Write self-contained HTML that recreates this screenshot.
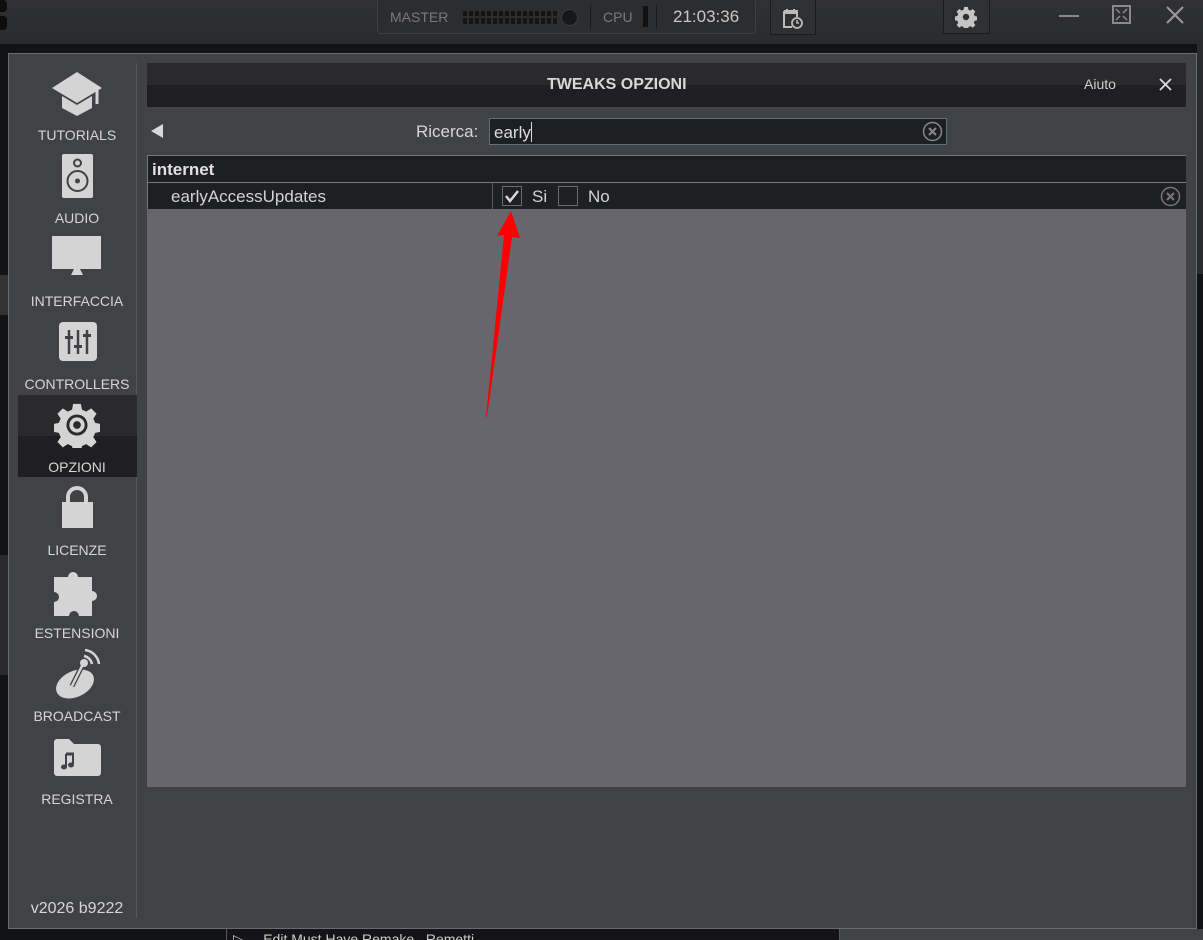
<!DOCTYPE html>
<html><head><meta charset="utf-8"><style>
*{margin:0;padding:0;box-sizing:border-box}
html,body{width:1203px;height:940px;overflow:hidden}
body{background:#121315;font-family:"Liberation Sans",sans-serif;position:relative}
.a{position:absolute}
.top{left:0;top:0;width:1203px;height:44px;background:linear-gradient(#303133,#2a2b2d)}
.dlg{left:8px;top:53px;width:1189px;height:876px;background:#414246;border:1px solid #6b6b6e}
.lbl{position:absolute;left:18px;width:118px;text-align:center;color:#d6d6d6;font-size:14px}
.ic{position:absolute}
</style></head><body>
<div class="a top"></div>
<div class="a" style="left:0;top:0;width:7px;height:12px;background:#0d0d0e;border-radius:0 4px 4px 0"></div>
<div class="a" style="left:0;top:16px;width:7px;height:14px;background:#0d0d0e;border-radius:0 4px 4px 0"></div>
<div class="a" style="left:377px;top:0;width:379px;height:34px;background:#2c2d2f;border:1px solid #3e3f42;border-top:none;border-radius:0 0 4px 4px"></div>
<div class="a" style="left:390px;top:9px;color:#7a7a7c;font-size:14px">MASTER</div>
<div class="a" style="left:463px;top:11px;width:94px;height:13px;background:repeating-linear-gradient(90deg,#151516 0 4px,transparent 4px 6px);"></div>
<div class="a" style="left:463px;top:16px;width:94px;height:2px;background:#2c2d2f"></div>
<div class="a" style="left:561px;top:9px;width:17px;height:17px;border-radius:50%;background:#161718;border:1px solid #3a3a3c"></div>
<div class="a" style="left:590px;top:5px;width:1px;height:24px;background:#18191a"></div>
<div class="a" style="left:603px;top:9px;color:#7a7a7c;font-size:14px">CPU</div>
<div class="a" style="left:643px;top:6px;width:5px;height:21px;background:#111"></div>
<div class="a" style="left:656px;top:5px;width:1px;height:24px;background:#18191a"></div>
<div class="a" style="left:673px;top:7px;color:#c8c8c8;font-size:17px">21:03:36</div>
<div class="a" style="left:770px;top:0;width:46px;height:35px;background:#2f3032;border:1px solid #1b1b1c;border-top:none"></div>
<svg class="a" style="left:782px;top:7px" width="22" height="22" viewBox="0 0 22 22"><path d="M2 4h13v6M2 4v16h8" fill="none" stroke="#bbb" stroke-width="2"/><rect x="2" y="4" width="13" height="3" fill="#bbb"/><path d="M5 2v3M12 2v3" stroke="#bbb" stroke-width="2"/><circle cx="15" cy="16" r="5" fill="none" stroke="#bbb" stroke-width="1.8"/><path d="M15 13v3h2" stroke="#bbb" fill="none" stroke-width="1.5"/></svg>
<div class="a" style="left:943px;top:0;width:47px;height:34px;background:#2f3032;border:1px solid #1b1b1c;border-top:none"></div>
<svg class="a" style="left:955px;top:6px" width="22" height="22" viewBox="0 0 24 24"><path fill="#c4c4c4" d="M10 1h4l.6 3 2.2 1 2.6-1.7 2.8 2.8-1.7 2.6 1 2.2 3 .6v4l-3 .6-1 2.2 1.7 2.6-2.8 2.8-2.6-1.7-2.2 1-.6 3h-4l-.6-3-2.2-1-2.6 1.7-2.8-2.8 1.7-2.6-1-2.2-3-.6v-4l3-.6 1-2.2-1.7-2.6 2.8-2.8 2.6 1.7 2.2-1z"/><circle cx="12" cy="12" r="3.5" fill="#2f3032"/></svg>
<div class="a" style="left:1059px;top:15px;width:20px;height:2px;background:#8a8a8c"></div>
<div class="a" style="left:1112px;top:5px;width:19px;height:19px;border:2px solid #8a8a8c"></div>
<svg class="a" style="left:1112px;top:5px" width="19" height="19"><path d="M4 4l4 4M15 4l-4 4M4 15l4-4M15 15l-4-4" stroke="#8a8a8c" stroke-width="1.5"/></svg>
<svg class="a" style="left:1165px;top:5px" width="20" height="20"><path d="M2 2l16 16M18 2L2 18" stroke="#9a9a9c" stroke-width="2"/></svg>
<div class="a" style="left:0;top:275px;width:8px;height:40px;background:#333"></div>
<div class="a" style="left:0;top:555px;width:8px;height:120px;background:#2b2b2d"></div>
<div class="a" style="left:1197px;top:44px;width:6px;height:230px;background:#2a2b2d"></div>
<div class="a" style="left:226px;top:929px;width:614px;height:11px;background:#141416;border-left:1px solid #555;border-right:1px solid #555;overflow:hidden">
<div style="position:absolute;left:6px;top:3px;color:#ccc;font-size:14px;line-height:14px;white-space:nowrap">▷&nbsp;&nbsp;&nbsp;&nbsp;&nbsp;Edit Must Have Remake &nbsp;&nbsp;Remetti</div></div>
<div class="a" style="left:840px;top:929px;width:363px;height:11px;background:#414246"></div>

<div class="a dlg"></div>
<div class="a" style="left:136px;top:63px;width:1px;height:855px;background:#56575a"></div>
<div class="a" style="left:18px;top:395px;width:119px;height:82px;background:linear-gradient(#2a2a2c 0 50%,#1f1f21 50%)"></div>

<svg class="ic" style="left:50px;top:70px" width="54" height="48" viewBox="0 0 54 48"><path d="M27 2L2 18l25 15 25-15z" fill="#d4d4d4"/><path d="M12 26v12l15 8 15-8V26l-15 9z" fill="#d4d4d4"/><path d="M47 20v14" stroke="#d4d4d4" stroke-width="3"/></svg>
<div class="lbl" style="top:127px">TUTORIALS</div>
<svg class="ic" style="left:62px;top:154px" width="31" height="44"><rect x="0" y="0" width="31" height="44" rx="2" fill="#d4d4d4"/><circle cx="15.5" cy="9" r="3.5" fill="none" stroke="#414246" stroke-width="2"/><circle cx="15.5" cy="27" r="10" fill="none" stroke="#414246" stroke-width="2"/><circle cx="15.5" cy="27" r="2.5" fill="#414246"/></svg>
<div class="lbl" style="top:210px">AUDIO</div>
<svg class="ic" style="left:52px;top:236px" width="50" height="42"><rect x="0" y="0" width="49" height="33" fill="#d4d4d4"/><path d="M22 33h6l3 6H19z" fill="#d4d4d4"/></svg>
<div class="lbl" style="top:293px">INTERFACCIA</div>
<svg class="ic" style="left:59px;top:322px" width="38" height="39"><rect x="0" y="0" width="38" height="39" rx="4" fill="#d4d4d4"/><g stroke="#414246" stroke-width="2.5"><path d="M10 8v24M19 8v24M28 8v24"/></g><g fill="#414246"><rect x="6" y="14" width="8" height="3"/><rect x="15" y="23" width="8" height="3"/><rect x="24" y="12" width="8" height="3"/></g></svg>
<div class="lbl" style="top:376px">CONTROLLERS</div>
<svg class="ic" style="left:54px;top:402px" width="46" height="46" viewBox="0 0 24 24"><path fill="#d4d4d4" d="M10 1h4l.6 3 2.2 1 2.6-1.7 2.8 2.8-1.7 2.6 1 2.2 3 .6v4l-3 .6-1 2.2 1.7 2.6-2.8 2.8-2.6-1.7-2.2 1-.6 3h-4l-.6-3-2.2-1-2.6 1.7-2.8-2.8 1.7-2.6-1-2.2-3-.6v-4l3-.6 1-2.2-1.7-2.6 2.8-2.8 2.6 1.7 2.2-1z"/><circle cx="12" cy="12" r="5.5" fill="#2a2a2c"/><circle cx="12" cy="12" r="4" fill="#d4d4d4"/><circle cx="12" cy="12" r="2" fill="#2a2a2c"/></svg>
<div class="lbl" style="top:459px">OPZIONI</div>
<svg class="ic" style="left:61px;top:485px" width="32" height="44"><path d="M7 18v-6a9 9 0 0118 0v6" fill="none" stroke="#d4d4d4" stroke-width="4"/><rect x="1" y="17" width="31" height="26" fill="#d4d4d4"/></svg>
<div class="lbl" style="top:542px">LICENZE</div>
<svg class="ic" style="left:52px;top:567px" width="50" height="50" viewBox="0 0 50 50"><path fill="#d4d4d4" d="M2 10h14a5 5 0 1 1 10 0h14v14a5 5 0 1 1 0 10v15H27a5 5 0 1 0-10 0H2V35a5 5 0 1 0 0-10z"/></svg>
<div class="lbl" style="top:625px">ESTENSIONI</div>
<svg class="ic" style="left:54px;top:648px" width="48" height="52"><ellipse cx="21" cy="36" rx="20" ry="13" transform="rotate(-25 21 36)" fill="#d4d4d4"/><path d="M18 38l11-22" stroke="#414246" stroke-width="5"/><path d="M18 38l11-22" stroke="#d4d4d4" stroke-width="2.5"/><circle cx="30" cy="15" r="4" fill="#d4d4d4"/><path d="M30 8a10 10 0 0 1 8 8M31 2a16 16 0 0 1 14 14" fill="none" stroke="#d4d4d4" stroke-width="2.5"/></svg>
<div class="lbl" style="top:708px">BROADCAST</div>
<svg class="ic" style="left:54px;top:739px" width="47" height="38"><path d="M0 3a3 3 0 013-3h12l5 5h24a3 3 0 013 3v26a3 3 0 01-3 3H3a3 3 0 01-3-3z" fill="#d4d4d4"/><path d="M12 15h8" stroke="#414246" stroke-width="3"/><path d="M12 15v13M19 15v10" stroke="#414246" stroke-width="2"/><ellipse cx="17" cy="26" rx="3" ry="2.5" fill="#414246"/><ellipse cx="10" cy="28" rx="3" ry="2.5" fill="#414246"/></svg>
<div class="lbl" style="top:791px">REGISTRA</div>
<div class="lbl" style="top:900px;font-size:16px">v2026 b9222</div>

<div class="a" style="left:147px;top:63px;width:1039px;height:44px;background:linear-gradient(#2a2a2c 0 50%,#1f1f21 50%)"></div>
<div class="a" style="left:547px;top:76px;color:#d8d8d8;font-size:16px;font-weight:bold">TWEAKS OPZIONI</div>
<div class="a" style="left:1084px;top:76px;color:#d0d0d0;font-size:14px">Aiuto</div>
<svg class="a" style="left:1159px;top:78px" width="13" height="13"><path d="M1 1l11 11M12 1L1 12" stroke="#ddd" stroke-width="1.8"/></svg>

<svg class="a" style="left:151px;top:124px" width="12" height="14"><path d="M12 0v14L0 7z" fill="#d8d8d8"/></svg>
<div class="a" style="left:416px;top:122px;color:#d6d6d6;font-size:17px">Ricerca:</div>
<div class="a" style="left:489px;top:118px;width:458px;height:27px;background:#1e1f22;border:1px solid #5a7086"></div>
<div class="a" style="left:494px;top:122px;color:#dcdcdc;font-size:17px">early<span style="display:inline-block;width:1px;height:20px;background:#ddd;vertical-align:-4px"></span></div>
<svg class="a" style="left:922px;top:121px" width="21" height="21"><circle cx="10.5" cy="10.5" r="9" fill="none" stroke="#888" stroke-width="1.5"/><path d="M7 7l7 7M14 7l-7 7" stroke="#888" stroke-width="2"/></svg>

<div class="a" style="left:147px;top:155px;width:1039px;height:28px;background:#1e1f22;border-top:1px solid #77777a;border-left:1px solid #77777a;border-bottom:1px solid #77777a"></div>
<div class="a" style="left:152px;top:160px;color:#e0e0e0;font-size:17px;font-weight:bold">internet</div>
<div class="a" style="left:147px;top:183px;width:1039px;height:26px;background:#1e1f22;border-left:1px solid #77777a"></div>
<div class="a" style="left:492px;top:183px;width:1px;height:26px;background:#5a5a5d"></div>
<div class="a" style="left:171px;top:187px;color:#d4d4d4;font-size:17px">earlyAccessUpdates</div>
<div class="a" style="left:502px;top:186px;width:20px;height:20px;border:1px solid #6a6a6d"></div>
<svg class="a" style="left:502px;top:186px" width="20" height="20"><path d="M4 10l4 5 8-10" fill="none" stroke="#d8d8d8" stroke-width="2.5"/></svg>
<div class="a" style="left:532px;top:187px;color:#d4d4d4;font-size:17px">Si</div>
<div class="a" style="left:558px;top:186px;width:20px;height:20px;border:1px solid #6a6a6d"></div>
<div class="a" style="left:588px;top:187px;color:#d4d4d4;font-size:17px">No</div>
<svg class="a" style="left:1160px;top:186px" width="21" height="21"><circle cx="10.5" cy="10.5" r="9" fill="none" stroke="#777" stroke-width="1.5"/><path d="M7 7l7 7M14 7l-7 7" stroke="#777" stroke-width="2"/></svg>
<div class="a" style="left:147px;top:209px;width:1039px;height:578px;background:#67666c"></div>

<svg class="a" style="left:470px;top:200px" width="70" height="230"><path d="M41 11L27 36 34 35 16 217 17 217 42 37 50 38z" fill="#ff0000"/></svg>
</body></html>
